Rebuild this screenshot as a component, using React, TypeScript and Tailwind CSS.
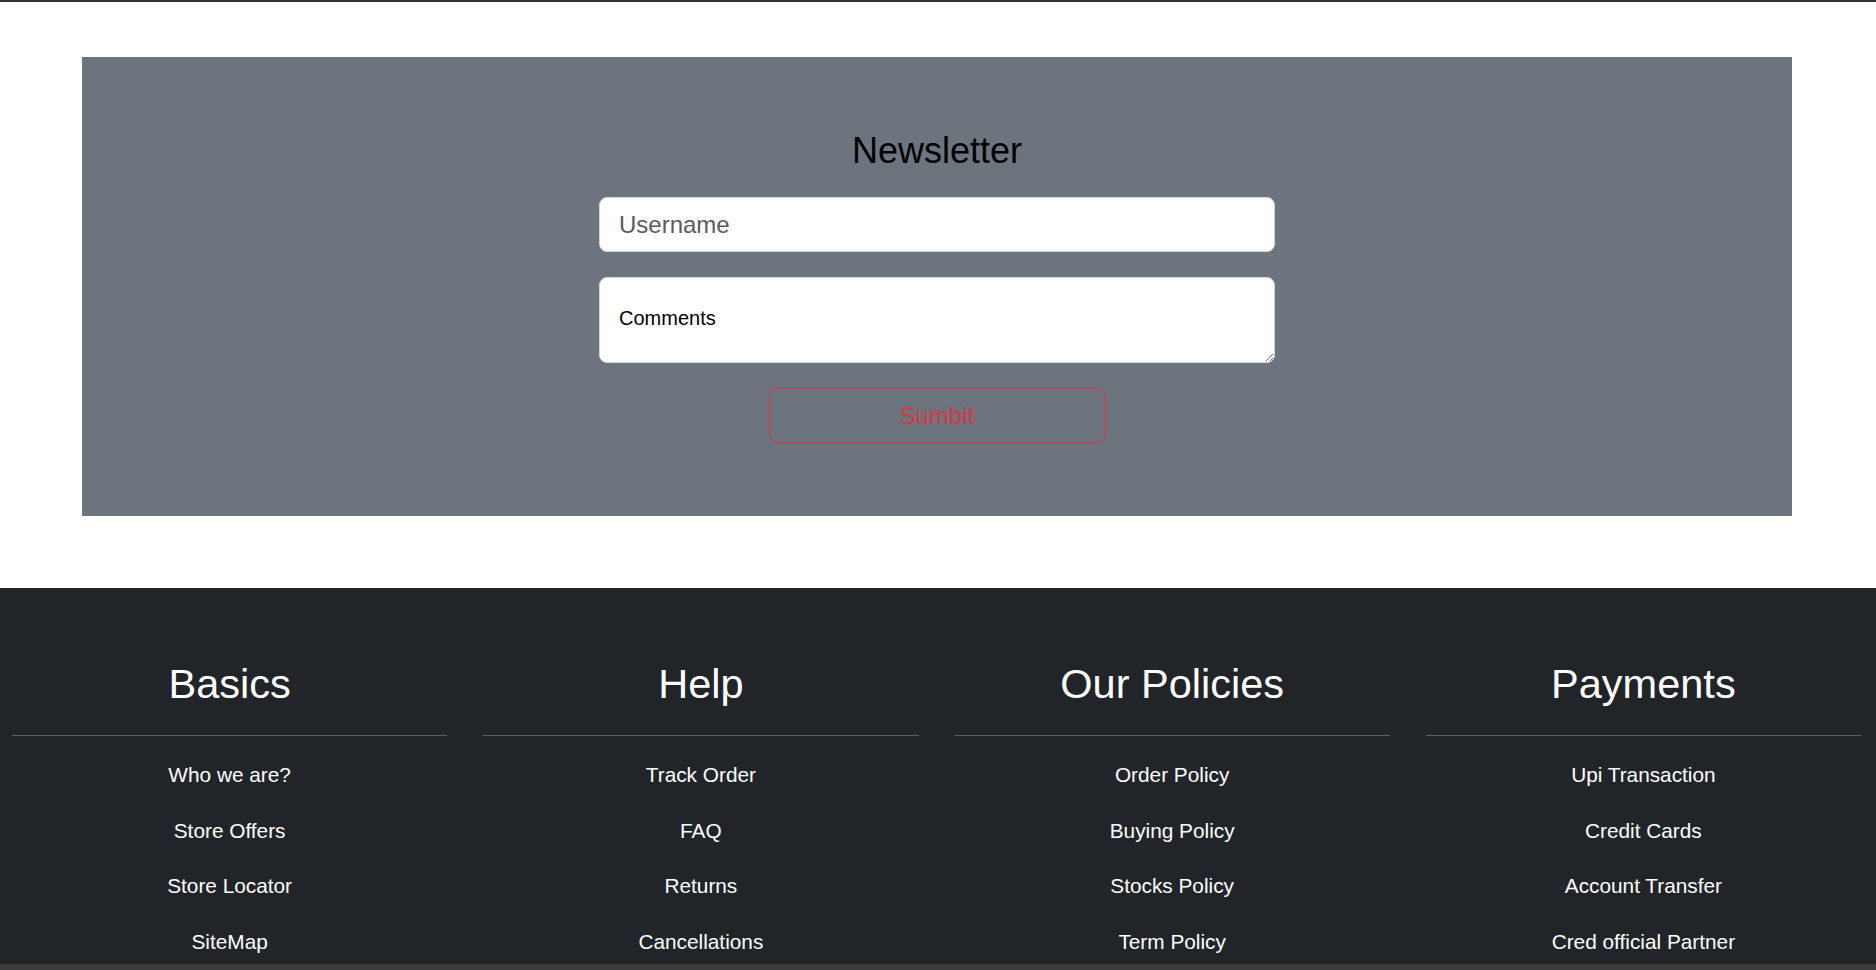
import React from "react";

const columns = [
  { title: "Basics", links: ["Who we are?", "Store Offers", "Store Locator", "SiteMap"] },
  { title: "Help", links: ["Track Order", "FAQ", "Returns", "Cancellations"] },
  { title: "Our Policies", links: ["Order Policy", "Buying Policy", "Stocks Policy", "Term Policy"] },
  { title: "Payments", links: ["Upi Transaction", "Credit Cards", "Account Transfer", "Cred official Partner"] },
];

export default function App() {
  return (
    <div
      className="h-[970px] flex flex-col overflow-hidden bg-white"
      style={{ fontFamily: '"Liberation Sans", Arial, sans-serif' }}
    >
      <div className="h-[2px] bg-[#333333] shrink-0" />

      <div className="flex-1 overflow-hidden">
        {/* Newsletter */}
        <section className="pt-[55px] pb-[72px]">
          <div className="ml-[82px] mr-[84px] bg-[#6c757d] pt-[72px] pb-[73px] flex flex-col items-center">
            <h2 className="text-[36px] leading-[1.2] text-black mb-[25px]">Newsletter</h2>
            <form className="w-[676px] flex flex-col items-center">
              <input
                type="text"
                placeholder="Username"
                className="w-full h-[55px] rounded-[8px] border border-[#ced4da] bg-white px-[19px] text-[24px] text-black placeholder:text-[#595c5f] outline-none"
              />
              <textarea
                defaultValue="Comments"
                className="mt-[25px] w-full h-[86px] rounded-[8px] border border-[#ced4da] bg-white px-[19px] pt-[26px] text-[20px] leading-[1.44] text-black outline-none"
              />
              <button
                type="button"
                className="mt-[25px] w-[337px] h-[55px] rounded-[8px] border border-[#dc3545] text-[#dc3545] text-[24px]"
              >
                Sumbit
              </button>
            </form>
          </div>
        </section>

        {/* Footer */}
        <footer className="bg-[#212529] text-white pt-[72px] pb-[20px]">
          <div className="flex gap-[36px] pl-[12px] pr-[15px]">
            {columns.map((col) => (
              <div key={col.title} className="flex-1 flex flex-col items-center">
                <h3 className="text-[41.5px] leading-[1.16] mb-[27px]">{col.title}</h3>
                <hr className="w-full border-0 border-t border-[#5b5e62] mb-[11px]" />
                <ul className="text-center">
                  {col.links.map((l) => (
                    <li key={l} className="text-[20.8px] leading-[55.5px]">
                      <a href="#" className="text-white">{l}</a>
                    </li>
                  ))}
                </ul>
              </div>
            ))}
          </div>
        </footer>
      </div>

      <div className="h-[6px] bg-[#3c3c3c] shrink-0" />
    </div>
  );
}
